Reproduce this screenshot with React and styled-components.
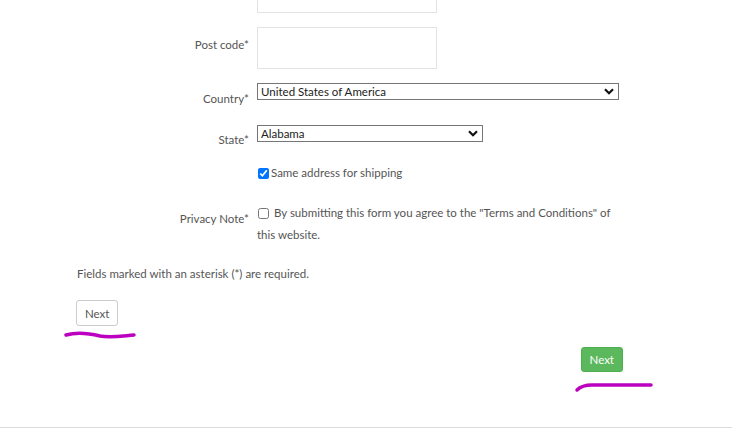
import React from 'react';
import styled, { createGlobalStyle } from 'styled-components';

const Global = createGlobalStyle`
  html, body { margin: 0; padding: 0; background: #fff; }
  body { font-family: Lato, "Liberation Sans", sans-serif; color: #555; }
`;

const Page = styled.div`
  position: relative;
  width: 732px;
  height: 436px;
  overflow: hidden;
`;

const Form = styled.div`
  display: flex;
  flex-direction: column;
  margin-top: -29px;
`;

const Row = styled.div`
  display: grid;
  grid-template-columns: 249px 362px;
  column-gap: 8px;
  align-items: start;
  margin-top: ${(p) => p.$top || 0}px;
`;

const Label = styled.label`
  text-align: right;
  font-size: 11.5px;
  line-height: 14px;
  padding-top: ${(p) => p.$offset || 0}px;
  color: #555;
`;

const TextBox = styled.input`
  display: block;
  box-sizing: border-box;
  width: 180px;
  height: 42px;
  border: 1px solid #e3e3e3;
  outline: none;
  margin: 0;
`;

const SelectWrap = styled.div`
  position: relative;
  width: ${(p) => p.$width}px;
`;

const Select = styled.select`
  display: block;
  appearance: none;
  box-sizing: border-box;
  width: 100%;
  height: 17px;
  margin: 0;
  padding: 0 0 0 3px;
  border: 1px solid #767676;
  border-radius: 0;
  background: #fff;
  font-family: Lato, "Liberation Sans", sans-serif;
  font-size: 11.5px;
  color: #222;
  line-height: 15px;
`;

const Chevron = styled.svg`
  position: absolute;
  right: 5px;
  top: 5px;
  pointer-events: none;
`;

const CheckLine = styled.div`
  font-size: 11.5px;
  line-height: 22px;
  color: #555;
`;

const Box = styled.input`
  width: 11px;
  height: 11px;
  margin: 0 ${(p) => p.$gap}px 0 1px;
  vertical-align: middle;
  position: relative;
  top: -1px;
  accent-color: #0075ff;
`;

const Note = styled.p`
  margin: 21px 0 0 77px;
  font-size: 11.5px;
  line-height: 14px;
  color: #555;
`;

const Button = styled.button`
  box-sizing: border-box;
  height: ${(p) => (p.$primary ? 25 : 26)}px;
  padding: 0 8px;
  border-radius: 3px;
  font-family: Lato, "Liberation Sans", sans-serif;
  font-size: 11.5px;
  cursor: pointer;
  border: 1px solid ${(p) => (p.$primary ? '#4cae4c' : '#ccc')};
  background: ${(p) => (p.$primary ? '#5cb85c' : '#fff')};
  color: ${(p) => (p.$primary ? '#fff' : '#555')};
`;

const Actions = styled.div`
  display: flex;
  justify-content: ${(p) => (p.$end ? 'flex-end' : 'flex-start')};
  margin-top: ${(p) => p.$top}px;
  padding: ${(p) => (p.$end ? '0 109px 0 0' : '0 0 0 76px')};
`;

const Footer = styled.div`
  position: absolute;
  left: 0;
  right: 0;
  top: 427px;
  border-top: 1px solid #dcdcdc;
`;

const Scribble = styled.svg`
  position: absolute;
  left: 0;
  top: 0;
  pointer-events: none;
`;

const Arrow = () => (
  <Chevron width="10" height="7" viewBox="0 0 10 7">
    <path d="M1 1.2 L5 5.2 L9 1.2" fill="none" stroke="#111" strokeWidth="2.2" />
  </Chevron>
);

export default function App() {
  return (
    <Page>
      <Global />
      <Form>
        <Row>
          <Label />
          <TextBox />
        </Row>
        <Row $top={14}>
          <Label $offset={11}>Post code*</Label>
          <TextBox />
        </Row>
        <Row $top={14}>
          <Label $offset={9}>Country*</Label>
          <SelectWrap $width={362}>
            <Select defaultValue="us">
              <option value="us">United States of America</option>
            </Select>
            <Arrow />
          </SelectWrap>
        </Row>
        <Row $top={19}>
          <Label $offset={8}>State*</Label>
          <SelectWrap $width={226}>
            <Select defaultValue="al">
              <option value="al">Alabama</option>
            </Select>
            <Arrow />
          </SelectWrap>
        </Row>
        <Row $top={15}>
          <Label />
          <CheckLine>
            <Box type="checkbox" defaultChecked $gap={2} />
            Same address for shipping
          </CheckLine>
        </Row>
        <Row $top={18}>
          <Label $offset={10}>Privacy Note*</Label>
          <CheckLine>
            <Box type="checkbox" $gap={5} />
            By submitting this form you agree to the "Terms and Conditions" of this website.
          </CheckLine>
        </Row>
      </Form>
      <Note>Fields marked with an asterisk (*) are required.</Note>
      <Actions $top={19}>
        <Button>Next</Button>
      </Actions>
      <Actions $end $top={21}>
        <Button $primary>Next</Button>
      </Actions>
      <Footer />
      <Scribble width="732" height="436">
        <path
          d="M66 335 C76 332 88 333 100 336 C110 338 122 336 134 335"
          fill="none"
          stroke="#bb00c0"
          strokeWidth="3.5"
          strokeLinecap="round"
        />
        <path
          d="M577 390 C580 387 584 385 592 385 L651 385"
          fill="none"
          stroke="#bb00c0"
          strokeWidth="3.5"
          strokeLinecap="round"
        />
      </Scribble>
    </Page>
  );
}
